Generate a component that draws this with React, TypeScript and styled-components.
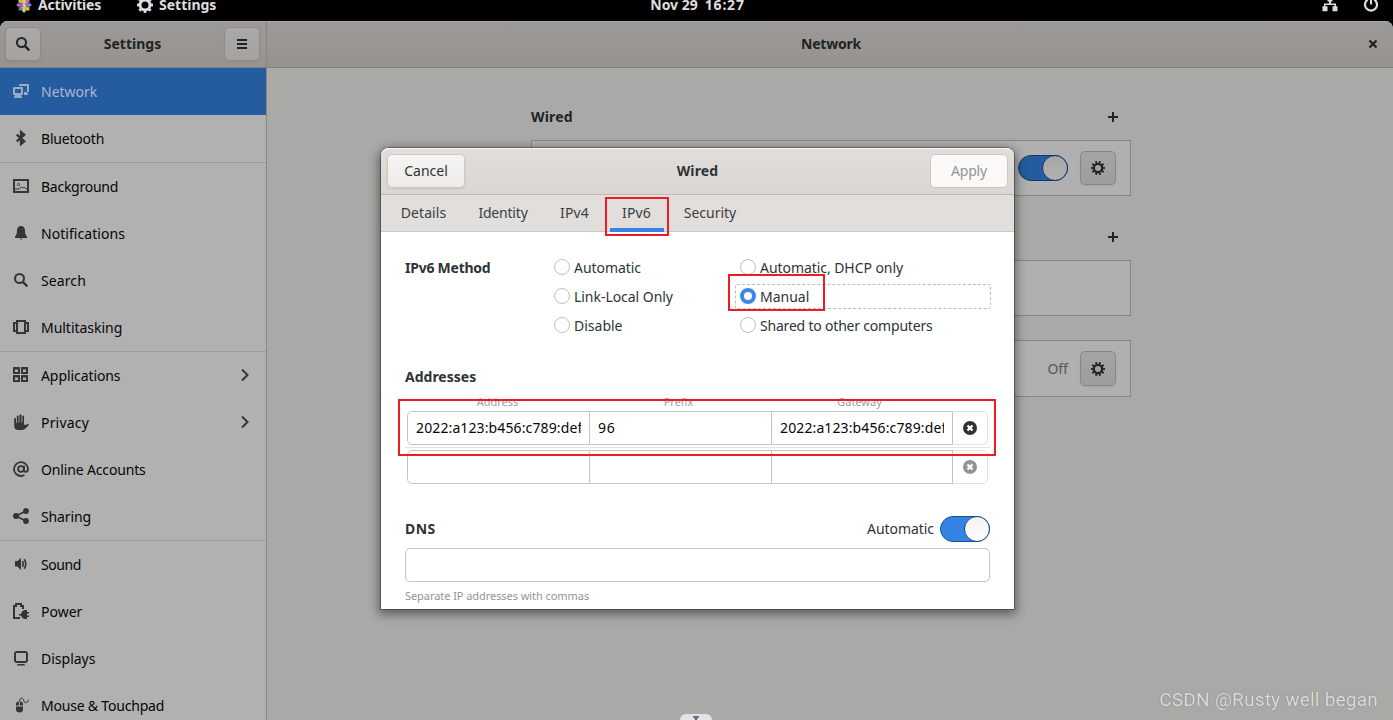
import React from 'react';
import styled, { createGlobalStyle, css } from 'styled-components';

const GlobalStyle = createGlobalStyle`
  *, *::before, *::after { box-sizing: border-box; }
  html, body { margin: 0; padding: 0; height: 720px; overflow: hidden; background: #000; }
  body { font-family: "Noto Sans", "Open Sans", sans-serif; font-size: 14px; line-height: 19px; color: #2e3436; }
  svg { display: block; flex: none; }
`;

const Screen = styled.div`
  position: relative;
  width: 1393px;
  height: 720px;
  overflow: hidden;
  display: flex;
  flex-direction: column;
  background: #000;
`;

const Text = styled.span<{ $ls?: number; $bold?: boolean; $lift?: number }>`
  letter-spacing: ${p => p.$ls ?? 0}px;
  font-weight: ${p => (p.$bold ? 700 : 400)};
  padding-bottom: ${p => p.$lift ?? 0}px;
  white-space: pre;
`;

/* ---------- top bar ---------- */
const TopBar = styled.header`
  flex: none;
  height: 33px;
  margin-top: -12px;
  padding: 0 14px 0 16px;
  display: grid;
  grid-template-columns: 1fr auto 1fr;
  align-items: center;
  color: #dedede;
`;
const TopGroup = styled.div<{ $gap: number; $end?: boolean }>`
  display: flex;
  align-items: center;
  gap: ${p => p.$gap}px;
  justify-content: ${p => (p.$end ? 'flex-end' : 'flex-start')};
`;

/* ---------- settings window ---------- */
const Window = styled.div`
  flex: 1;
  min-height: 0;
  display: grid;
  grid-template-columns: 267px 1fr;
  border-radius: 8px 8px 0 0;
  overflow: hidden;
  background: #a9a9a7;
`;
const Sidebar = styled.aside`
  display: flex;
  flex-direction: column;
  min-height: 0;
  border-right: 1px solid #888784;
  background: #b1b1b1;
`;
const headerBar = css`
  flex: none;
  height: 47px;
  display: flex;
  align-items: center;
  border-bottom: 1px solid #82807b;
  background: linear-gradient(#9c9a98, #96938f);
  box-shadow: inset 0 1px #adabaa;
  color: #1f2425;
`;
const SidebarHeader = styled.div`
  ${headerBar}
  padding: 0 6px 0 5px;
  justify-content: space-between;
`;
const HeaderButton = styled.button`
  width: 36px;
  height: 34px;
  padding: 0;
  display: grid;
  place-items: center;
  border: 1px solid #8f8c88;
  border-radius: 5px;
  background: linear-gradient(#aaa9a8, #a4a3a1);
  box-shadow: 0 1px 2px rgba(0, 0, 0, 0.08);
  color: #1f2425;
`;
const NavList = styled.nav`
  display: flex;
  flex-direction: column;
`;
const NavRow = styled.div<{ $active?: boolean; $divided?: boolean }>`
  flex: none;
  height: ${p => (p.$divided ? '48' : '47')}px;
  padding: 0 17px 0 13px;
  display: grid;
  grid-template-columns: 16px 1fr auto;
  column-gap: 12px;
  align-items: center;
  border-top: ${p => (p.$divided ? '1px solid #9b9b9b' : '0')};
  background: ${p => (p.$active ? '#255b9f' : 'transparent')};
  color: ${p => (p.$active ? '#a9b8cc' : '#060606')};
  & > svg { margin-bottom: 1px; color: ${p => (p.$active ? '#98acc8' : '#333536')}; }
`;

const Main = styled.main`
  display: flex;
  flex-direction: column;
  min-width: 0;
`;
const MainHeader = styled.div`
  ${headerBar}
  padding: 0 15px 0 17px;
  display: grid;
  grid-template-columns: 10px 1fr 10px;
  text-align: center;
`;
const MainBody = styled.div`
  width: 600px;
  margin-left: 264px;
  padding-top: 30px;
  color: #1f2425;
`;
const GroupHeading = styled.div`
  height: 38px;
  margin-bottom: 4px;
  padding-right: 13px;
  display: flex;
  align-items: center;
  justify-content: space-between;
  & > svg { margin-left: auto; }
`;
const Card = styled.section<{ $h?: number; $mb: number }>`
  height: ${p => p.$h ?? 56}px;
  margin-bottom: ${p => p.$mb}px;
  padding-right: 14px;
  display: flex;
  align-items: center;
  justify-content: flex-end;
  gap: 12px;
  border: 1px solid #888681;
  background: #b0b0b0;
  color: #555757;
`;
const GearButton = styled(HeaderButton)<{ $h?: number }>`
  height: ${p => p.$h ?? 34}px;
  border-color: #888681;
  background: linear-gradient(#a5a4a2, #9f9d9b);
`;
const Switch = styled.span<{ $dim?: boolean }>`
  width: 50px;
  height: 26px;
  flex: none;
  display: flex;
  justify-content: flex-end;
  border: 1px solid ${p => (p.$dim ? '#12396b' : '#185199')};
  border-radius: 13px;
  background: ${p => (p.$dim ? '#255b9f' : '#3584e4')};
  &::after {
    content: "";
    width: 26px;
    height: 26px;
    margin: -1px;
    border-radius: 50%;
    border: 1px solid ${p => (p.$dim ? '#12396b' : '#185199')};
    background: ${p => (p.$dim ? 'linear-gradient(#a6a6a5, #b0b0b0)' : 'linear-gradient(#f4f3f2, #fff)')};
  }
`;

/* ---------- dialog ---------- */
const Dialog = styled.div`
  position: absolute;
  left: 381px;
  top: 148px;
  width: 633px;
  height: 461px;
  display: flex;
  flex-direction: column;
  border-radius: 8px 8px 0 0;
  background: #fff;
  box-shadow: 0 3px 11px 2px rgba(0, 0, 0, 0.48), 0 0 0 1px rgba(0, 0, 0, 0.3);
`;
const DialogHeader = styled.div`
  flex: none;
  height: 47px;
  padding: 0 6px;
  display: flex;
  align-items: center;
  justify-content: space-between;
  border-bottom: 1px solid #bfb8b1;
  border-radius: 8px 8px 0 0;
  background: linear-gradient(#e1dedb, #dad6d2);
  box-shadow: inset 0 1px #f9f8f8;
`;
const DialogButton = styled.button<{ $disabled?: boolean }>`
  width: 78px;
  height: 34px;
  padding: 0 0 2px;
  font: inherit;
  border: 1px solid #cdc7c2;
  border-radius: 5px;
  background: ${p => (p.$disabled ? '#faf9f8' : 'linear-gradient(#f6f5f4, #edebe9)')};
  box-shadow: ${p => (p.$disabled ? 'none' : '0 1px 2px rgba(0,0,0,.1)')};
  color: ${p => (p.$disabled ? '#929595' : '#2e3436')};
`;
const Tabs = styled.div`
  flex: none;
  height: 37px;
  padding-left: 8px;
  display: flex;
  gap: 8px;
  border-bottom: 1px solid #cdc7c2;
  background: #e1dedb;
`;
const Tab = styled.div<{ $w: number; $active?: boolean }>`
  width: ${p => p.$w}px;
  height: 37px;
  padding: 0 1px 2px 0;
  display: flex;
  align-items: center;
  justify-content: center;
  color: #3b4143;
  box-shadow: ${p => (p.$active ? 'inset 0 -4px #3584e4' : 'none')};
`;
const DialogBody = styled.div`
  padding: 21px 24px 0;
`;
const MethodGrid = styled.div`
  display: grid;
  grid-template-columns: 149px 186px 1fr;
  grid-template-rows: repeat(3, 29px);
  align-items: center;
`;
const Option = styled.label<{ $col: number; $row: number; $focus?: boolean }>`
  grid-column: ${p => p.$col};
  grid-row: ${p => p.$row};
  height: 25px;
  display: flex;
  align-items: center;
  gap: 4px;
  ${p => p.$focus && css`
    margin: 0 -1px 0 -5px;
    padding-left: 4px;
    border: 1px dashed #b9bbbb;
    border-radius: 2px;
  `}
`;
const Radio = styled.i<{ $on?: boolean }>`
  width: 16px;
  height: 16px;
  margin-top: -1px;
  border-radius: 50%;
  border: ${p => (p.$on ? '4px solid #3a87e5' : '1px solid #c5bfb9')};
  background: #fff;
`;
const Addresses = styled.section`
  margin-top: 27px;
`;
const SectionTitle = styled.h3`
  margin: 0;
  font-size: 14px;
  line-height: 19px;
`;
const Columns = styled.div`
  margin: 8px 0 2px 2px;
  display: grid;
  grid-template-columns: repeat(3, 181px);
  text-align: center;
  font-size: 11px;
  line-height: 15px;
  color: #9a9d9e;
`;
const AddressRow = styled.div`
  height: 34px;
  margin: 0 2px;
  display: grid;
  grid-template-columns: 183px 182px 181px 35px;
`;
const Cell = styled.div`
  padding: 0 8px 2px;
  display: flex;
  align-items: center;
  border: 1px solid #c8c3bd;
  border-left-width: 0;
  color: #060606;
  &:first-child { border-left-width: 1px; border-radius: 5px 0 0 5px; }
  & > span { overflow: hidden; }
`;
const RemoveCell = styled.div<{ $dim?: boolean }>`
  display: grid;
  place-items: center;
  border: 1px solid #e3e0dd;
  border-left: 0;
  border-radius: 0 5px 5px 0;
  color: ${p => (p.$dim ? '#929595' : '#2e3436')};
`;
const RowLine = styled.div`
  height: 1px;
  margin: 2px 0;
  background: #e4e4e3;
`;
const DnsRow = styled.div`
  height: 26px;
  margin: 32px 0 6px;
  display: flex;
  align-items: center;
  gap: 6px;
  & > :first-child { margin-right: auto; }
`;
const Entry = styled.div`
  height: 34px;
  border: 1px solid #c8c3bd;
  border-radius: 5px;
`;
const Hint = styled.div`
  margin-top: 6px;
  font-size: 11px;
  line-height: 15px;
  color: #929595;
`;

/* ---------- overlays ---------- */
const Highlight = styled.div<{ $x: number; $y: number; $w: number; $h: number }>`
  position: absolute;
  left: ${p => p.$x}px;
  top: ${p => p.$y}px;
  width: ${p => p.$w}px;
  height: ${p => p.$h}px;
  border: 2px solid #ed1c24;
`;
const Watermark = styled.div`
  position: absolute;
  right: 15px;
  bottom: 8px;
  font: 19px/24px Roboto, sans-serif;
  letter-spacing: 0.22px;
  white-space: pre;
  color: #dcdcdc;
  text-shadow: 0 0 1px rgba(70, 70, 70, 0.7);
`;
const PullTab = styled.div`
  position: absolute;
  left: 680px;
  bottom: 0;
  width: 32px;
  height: 6px;
  display: grid;
  place-items: end center;
  border-radius: 8px 8px 0 0;
  background: #e3e4e9;
`;

/* ---------- icons ---------- */
const Svg = ({ children, size = 16 }: { children: React.ReactNode; size?: number }) => (
  <svg width={size} height={size} viewBox="0 0 16 16" fill="currentColor">{children}</svg>
);
const stroke = { fill: 'none', stroke: 'currentColor', strokeWidth: 2 } as const;

const SearchIcon = () => (
  <Svg><circle cx="6.5" cy="6.5" r="4.5" {...stroke} /><path d="M9.8 9.8 14.3 14.3" {...stroke} strokeWidth={2.4} /></Svg>
);
const MenuIcon = () => <Svg><path d="M3 3h10v2H3zM3 7h10v2H3zM3 11h10v2H3z" /></Svg>;
const NetworkIcon = () => (
  <Svg>
    <path fillRule="evenodd" d="M1 4h8a1 1 0 0 1 1 1v6a1 1 0 0 1-1 1H8l1 2v1H1v-1l1-2H1a1 1 0 0 1-1-1V5a1 1 0 0 1 1-1zm1 2v4h6V6z" />
    <path d="M6 3V2a1 1 0 0 1 1-1h8a1 1 0 0 1 1 1v6a1 1 0 0 1-1 1h-1l1 2v1h-4V9h3V3z" />
  </Svg>
);
const BluetoothIcon = () => <Svg><path d="M3.7 4.6 11.2 11.2 8 14V2l3.2 2.8L3.7 11.4" {...stroke} strokeWidth={2.3} /></Svg>;
const BackgroundIcon = () => (
  <Svg>
    <path fillRule="evenodd" d="M0 1h16v14H0zm2 2v10h12V3z" />
    <circle cx="5.5" cy="6.5" r="1.1" fill="none" stroke="currentColor" strokeWidth="0.9" />
    <path d="M2 11h4.2l2-2 1.2 1L11 9l3 2.6" fill="none" stroke="currentColor" />
  </Svg>
);
const BellIcon = () => (
  <Svg><path d="M8 1C5.2 1 4 3.3 4 6c0 3-.7 4-2 5.5V13h12v-1.5C12.7 10 12 9 12 6c0-2.7-1.2-5-4-5z" /><path d="M6.7 13.5h3l-1.5 1.2z" /></Svg>
);
const MultitaskIcon = () => (
  <Svg><path fillRule="evenodd" d="M3 1h10v14H3zm2 2v10h6V3z" /><path d="M0 3h4v2H2v6h2v2H0zM16 3h-4v2h2v6h-2v2h4z" /></Svg>
);
const AppsIcon = () => (
  <Svg>
    {[[0, 0], [8, 0], [0, 8], [8, 8]].map(([x, y]) => (
      <path key={`${x}${y}`} transform={`translate(${x} ${y})`} fillRule="evenodd" d="M.5 0h6a.5.5 0 0 1 .5.5v6a.5.5 0 0 1-.5.5h-6A.5.5 0 0 1 0 6.5v-6A.5.5 0 0 1 .5 0zM2 2.5v2.500h3V2.500z" />
    ))}
  </Svg>
);
const HandIcon = () => (
  <Svg><path d="M1.2 4.5Q2.1 3.5 3 4.5V9h.8V2Q4.7.8 5.600 2v6.500h.8V1Q7.500-.4 8.500 1v7.500h.8V2Q10.300 1 11 2v8.500l1.500.5L16 9.500c-.2 1.700-1.500 3.300-3 4.500-1.200 1.300-2.500 2-4.500 2H5c-2.500 0-3.800-1.500-3.800-4z" /></Svg>
);
const AtIcon = () => (
  <Svg><circle cx="8" cy="8" r="2.9" {...stroke} strokeWidth={1.8} /><path d="M11 4.800v4.400c0 1 .7 1.600 1.700 1.600 1.300 0 2.300-1 2.300-3A7 6.900 0 1 0 8 15c1.400 0 2.500-.3 3.500-.9" {...stroke} strokeWidth={1.8} /></Svg>
);
const ShareIcon = () => (
  <Svg><circle cx="3" cy="8" r="3" /><circle cx="13" cy="3" r="2.9" /><circle cx="13" cy="13" r="2.9" /><path d="M13 3 3 8l10 5" {...stroke} strokeWidth={1.8} /></Svg>
);
const SoundIcon = () => (
  <Svg><path d="M2 5h2.500L8 2v12l-3.500-3.500H2z" /><path d="M9.500 5.200c.9 1.700.9 3.900 0 5.600M11.200 3.200c2.100 2.600 2.100 7 0 9.600" {...stroke} strokeWidth={1.7} /></Svg>
);
const PowerIcon = () => (
  <Svg>
    <path d="M7 15H1V3h2V1h5v2h2v3" {...stroke} />
    <path d="M6 11h2c.5-2 2-4 4-4h2v2h2v1.500h-2v2h2V14h-2v2h-2c-2 0-3.500-1.700-4-3.500H6z" />
  </Svg>
);
const DisplayIcon = () => (
  <Svg><rect x="2" y="2" width="12" height="10" rx="2" {...stroke} /><path d="M5 14h6l1.500 1.600h-9z" /></Svg>
);
const MouseIcon = () => (
  <Svg>
    <path d="M3 8.500V7c0-1.600 1-2.500 2.900-2.500v4zM6.900 4.500C9 4.500 10 5.500 10 7v1.500H6.900zM3 9.500h7v2.700C10 14.300 8.500 15.500 6.500 15.500S3 14.300 3 12.200z" />
    <path d="M6.500 4.500c0-5 4-4 4.200-1 .3 3 4.300 3 4.800-.8" fill="none" stroke="currentColor" strokeWidth="1" />
  </Svg>
);
const ChevronIcon = () => <svg width="8" height="12" viewBox="0 0 8 12"><path d="M1 .5 6.500 6 1 11.500" {...stroke} /></svg>;
const PlusIcon = () => <svg width="10" height="10" viewBox="0 0 10 10" fill="currentColor"><path d="M4 0h2v4h4v2H6v4H4V6H0V4h4z" /></svg>;
const CloseIcon = () => <svg width="10" height="10" viewBox="0 0 10 10"><path d="M1.500 1.500l7 7m0-7l-7 7" {...stroke} strokeWidth={2.3} /></svg>;
const SmallGear = () => (
  <Svg>
    <circle cx="8" cy="8" r="4.2" {...stroke} strokeWidth={2.3} />
    <circle cx="8" cy="8" r="6" {...stroke} pathLength={20} strokeDasharray="1 1" strokeDashoffset="0.5" />
  </Svg>
);
const BarGear = () => (
  <Svg>
    <circle cx="8" cy="8" r="5" {...stroke} strokeWidth={3} />
    <circle cx="8" cy="8" r="7" {...stroke} pathLength={16} strokeDasharray="1 1" strokeDashoffset="0.5" />
  </Svg>
);
const RemoveIcon = () => (
  <svg width="14" height="14" viewBox="0 0 14 14">
    <circle cx="7" cy="7" r="7" fill="currentColor" />
    <path d="M4.500 4.500l5 5m0-5l-5 5" fill="none" stroke="#fff" strokeWidth="2.3" />
  </svg>
);
const DistroIcon = () => (
  <svg width="16" height="16" viewBox="0 0 16 16">
    <path d="M2.500 2.500H8V8H2.500z" fill="#8fc94a" /><path d="M8 2.500h5.500V8H8z" fill="#b04fa5" />
    <path d="M2.500 8H8v5.500H2.500z" fill="#5b4ba8" /><path d="M8 8h5.500v5.500H8z" fill="#f0a030" />
    <path d="M8 0l2.200 2.500V7L8 8 5.800 7V2.500z" fill="#e8b83a" /><path d="M16 8l-2.500 2.200H9L8 8l1-2.200h4.500z" fill="#6a5cb8" />
    <path d="M8 16l-2.200-2.500V9L8 8l2.200 1v4.500z" fill="#a0d040" /><path d="M0 8l2.500-2.200H7L8 8l-1 2.200H2.500z" fill="#a03c96" />
    <path d="M8 1v14M1 8h14M3 3l10 10M13 3L3 13" stroke="#efe6ef" strokeWidth=".5" />
  </svg>
);
const WiredIcon = () => <Svg><path d="M5.500 0h5v4.500H9V6.500h5v2.700h1.500v5h-5v-5h2V8H3.500v1.200h2v5h-5v-5H2V6.500h5v-2H5.500z" /></Svg>;
const PowerOffIcon = () => <Svg><path d="M4.700 2.600a6 6 0 1 0 6.600 0" {...stroke} strokeWidth={2.200} /><path d="M7 0h2v7.500H7z" /></Svg>;

/* ---------- data ---------- */
type NavItem = { label: string; icon: React.FC; ls?: number; active?: boolean; divided?: boolean; more?: boolean };
const navItems: NavItem[] = [
  { label: 'Network', icon: NetworkIcon, active: true },
  { label: 'Bluetooth', icon: BluetoothIcon, ls: -0.2 },
  { label: 'Background', icon: BackgroundIcon, ls: -0.26, divided: true },
  { label: 'Notifications', icon: BellIcon, ls: 0.05 },
  { label: 'Search', icon: SearchIcon, ls: 0.1 },
  { label: 'Multitasking', icon: MultitaskIcon, ls: -0.03 },
  { label: 'Applications', icon: AppsIcon, ls: -0.08, divided: true, more: true },
  { label: 'Privacy', icon: HandIcon, ls: 0.18, more: true },
  { label: 'Online Accounts', icon: AtIcon, ls: -0.15 },
  { label: 'Sharing', icon: ShareIcon, ls: -0.12 },
  { label: 'Sound', icon: SoundIcon, ls: -0.4, divided: true },
  { label: 'Power', icon: PowerIcon },
  { label: 'Displays', icon: DisplayIcon },
  { label: 'Mouse & Touchpad', icon: MouseIcon, ls: -0.2 },
];
const tabs = [
  { label: 'Details', w: 70, ls: 0.1 },
  { label: 'Identity', w: 73, ls: -0.2 },
  { label: 'IPv4', w: 54, ls: 0.15 },
  { label: 'IPv6', w: 54, ls: 0.15, active: true },
  { label: 'Security', w: 77 },
];
const methods = [
  { label: 'Automatic', col: 2, row: 1, ls: -0.06 },
  { label: 'Automatic, DHCP only', col: 3, row: 1, ls: -0.06 },
  { label: 'Link-Local Only', col: 2, row: 2, ls: -0.04 },
  { label: 'Manual', col: 3, row: 2, on: true },
  { label: 'Disable', col: 2, row: 3 },
  { label: 'Shared to other computers', col: 3, row: 3, ls: -0.2 },
];
const addressRows = [
  { cells: ['2022:a123:b456:c789:def', '96', '2022:a123:b456:c789:def'] },
  { cells: ['', '', ''], empty: true },
];
const highlights = [
  { x: 605, y: 197, w: 64, h: 39 },
  { x: 728, y: 274, w: 97, h: 37 },
  { x: 398, y: 399, w: 598, h: 57 },
];

export default function App() {
  return (
    <Screen>
      <GlobalStyle />
      <TopBar>
        <TopGroup $gap={36}>
          <TopGroup $gap={6}><DistroIcon /><Text $bold $ls={-0.2}>Activities</Text></TopGroup>
          <TopGroup $gap={6}><BarGear /><Text $bold>Settings</Text></TopGroup>
        </TopGroup>
        <TopGroup $gap={7}><Text $bold>Nov 29</Text><Text $bold $ls={0.8}>16:27</Text></TopGroup>
        <TopGroup $gap={25} $end><WiredIcon /><PowerOffIcon /></TopGroup>
      </TopBar>

      <Window>
        <Sidebar>
          <SidebarHeader>
            <HeaderButton><SearchIcon /></HeaderButton>
            <Text $bold $lift={2}>Settings</Text>
            <HeaderButton><MenuIcon /></HeaderButton>
          </SidebarHeader>
          <NavList>
            {navItems.map(({ label, icon: Icon, ls, active, divided, more }) => (
              <NavRow key={label} $active={active} $divided={divided}>
                <Icon />
                <Text $ls={ls}>{label}</Text>
                {more && <ChevronIcon />}
              </NavRow>
            ))}
          </NavList>
        </Sidebar>
        <Main>
          <MainHeader><i /><Text $bold $ls={-0.2} $lift={2}>Network</Text><CloseIcon /></MainHeader>
          <MainBody>
            <GroupHeading><Text $bold $ls={0.2} $lift={2}>Wired</Text><PlusIcon /></GroupHeading>
            <Card $mb={22}><Switch $dim /><GearButton><SmallGear /></GearButton></Card>
            <GroupHeading><PlusIcon /></GroupHeading>
            <Card $mb={24} />
            <Card $mb={0} $h={57}><Text>Off</Text><GearButton $h={35}><SmallGear /></GearButton></Card>
          </MainBody>
        </Main>
      </Window>

      <Dialog>
        <DialogHeader>
          <DialogButton>Cancel</DialogButton>
          <Text $bold $ls={0.15} $lift={2}>Wired</Text>
          <DialogButton $disabled><Text $ls={-0.15}>Apply</Text></DialogButton>
        </DialogHeader>
        <Tabs>
          {tabs.map(t => <Tab key={t.label} $w={t.w} $active={t.active}><Text $ls={t.ls}>{t.label}</Text></Tab>)}
        </Tabs>
        <DialogBody>
          <MethodGrid>
            <Text $bold $ls={-0.24}>IPv6 Method</Text>
            {methods.map(m => (
              <Option key={m.label} $col={m.col} $row={m.row} $focus={m.on}>
                <Radio $on={m.on} /><Text $ls={m.ls}>{m.label}</Text>
              </Option>
            ))}
          </MethodGrid>
          <Addresses>
            <SectionTitle>Addresses</SectionTitle>
            <Columns><span>Address</span><span>Prefix</span><span>Gateway</span></Columns>
            {addressRows.map((r, i) => (
              <React.Fragment key={i}>
                {i > 0 && <RowLine />}
                <AddressRow>
                  {r.cells.map((c, j) => <Cell key={j}><Text $ls={c.length > 2 ? 0.12 : 0.8}>{c}</Text></Cell>)}
                  <RemoveCell $dim={r.empty}><RemoveIcon /></RemoveCell>
                </AddressRow>
              </React.Fragment>
            ))}
          </Addresses>
          <DnsRow><Text $bold $ls={0.4} $lift={2}>DNS</Text><Text $lift={2} $ls={-0.06}>Automatic</Text><Switch /></DnsRow>
          <Entry />
          <Hint><Text $ls={-0.06}>Separate IP addresses with commas</Text></Hint>
        </DialogBody>
      </Dialog>

      {highlights.map(h => <Highlight key={h.y} $x={h.x} $y={h.y} $w={h.w} $h={h.h} />)}
      <PullTab><svg width="8" height="4" viewBox="0 0 8 4" fill="#666a78"><path d="M1 0h6v1L5 3v1H3V3L1 1z" /></svg></PullTab>
      <Watermark>CSDN @Rusty well began</Watermark>
    </Screen>
  );
}
